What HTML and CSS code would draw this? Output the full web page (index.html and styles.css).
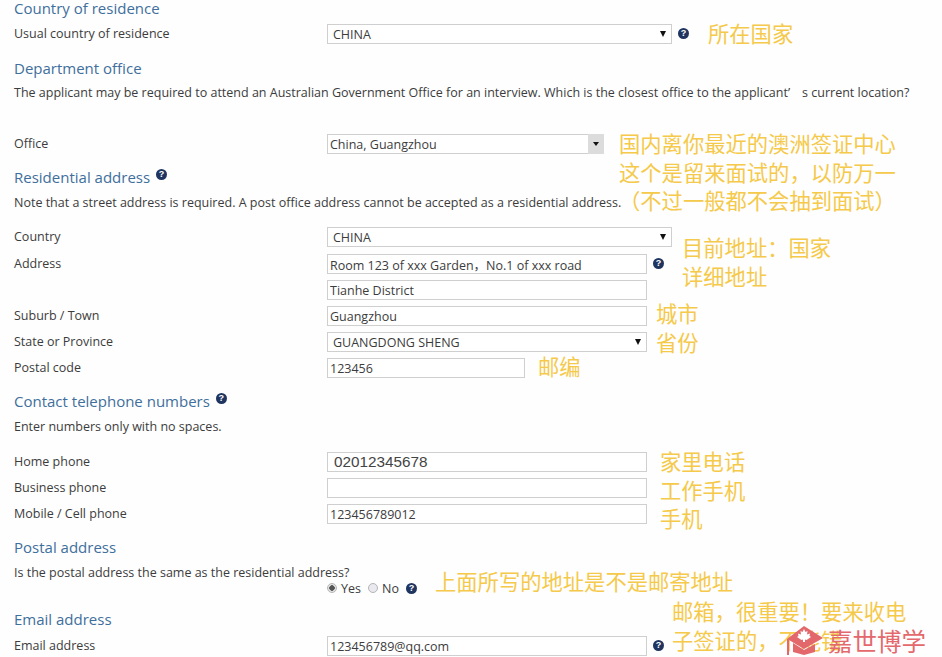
FILE: index.html
```html
<!DOCTYPE html>
<html lang="zh-CN">
<head>
<meta charset="utf-8">
<title>Application form</title>
<link rel="stylesheet" href="styles.css">
</head>
<body>
<main class="page">
  <h2 class="heading">Country of residence</h2>
  <div class="row mt6"><label class="label">Usual country of residence</label>
    <div class="select wide"><select><option>CHINA</option></select><i class="arrow"></i></div><span class="help">?</span></div>

  <h2 class="heading mt16">Department office</h2>
  <p class="text mt5">The applicant may be required to attend an Australian Government Office for an interview. Which is the closest office to the applicant<span class="cjkq">’</span>s current location?</p>
  <div class="row mt33"><label class="label">Office</label>
    <div class="select office"><select class="tight"><option>China, Guangzhou</option></select><span class="dropbtn"><i class="arrow"></i></span></div></div>

  <h2 class="heading mt15">Residential address <span class="help up">?</span></h2>
  <p class="text mt6">Note that a street address is required. A post office address cannot be accepted as a residential address.</p>
  <div class="group mt16">
    <div class="row"><label class="label">Country</label><div class="select wide"><select><option>CHINA</option></select><i class="arrow"></i></div></div>
    <div class="row nudge"><label class="label">Address</label><input class="field long" value="Room 123 of xxx Garden，No.1 of xxx road"><span class="help">?</span></div>
    <div class="row"><span class="label"></span><input class="field long" value="Tianhe District"></div>
    <div class="row"><label class="label">Suburb / Town</label><input class="field long" value="Guangzhou"></div>
    <div class="row"><label class="label">State or Province</label><div class="select long"><select><option>GUANGDONG SHENG</option></select><i class="arrow"></i></div></div>
    <div class="row"><label class="label">Postal code</label><input class="field short" value="123456"></div>
  </div>

  <h2 class="heading mt15">Contact telephone numbers <span class="help up">?</span></h2>
  <p class="text mt6">Enter numbers only with no spaces.</p>
  <div class="group mt17">
    <div class="row"><label class="label">Home phone</label><input class="field long big" value="02012345678"></div>
    <div class="row"><label class="label">Business phone</label><input class="field long" value=""></div>
    <div class="row"><label class="label">Mobile / Cell phone</label><input class="field long" value="123456789012"></div>
  </div>

  <h2 class="heading mt15">Postal address</h2>
  <p class="text mt6">Is the postal address the same as the residential address?</p>
  <div class="radios">
    <span class="radio on"></span><span class="opt">Yes</span>
    <span class="radio"></span><span class="opt">No</span>
    <span class="help">?</span>
  </div>

  <h2 class="heading mt15">Email address</h2>
  <div class="row mt7"><label class="label">Email address</label><input class="field long" value="123456789@qq.com"><span class="help">?</span></div>
</main>

<div class="note n-country">所在国家</div>
<div class="note n-office">国内离你最近的澳洲签证中心<br>这个是留来面试的，以防万一<br>（不过一般都不会抽到面试）</div>
<div class="note n-addr">目前地址：国家<br>详细地址</div>
<div class="note n-city">城市<br>省份</div>
<div class="note n-post">邮编</div>
<div class="note n-phone">家里电话<br>工作手机<br>手机</div>
<div class="note n-same">上面所写的地址是不是邮寄地址</div>
<div class="note n-mail">邮箱，很重要！要来收电<br>子签证的，不能错</div>

<div class="logo">
  <svg class="logo-cap" width="38" height="30" viewBox="0 0 38 30" aria-hidden="true">
    <path d="M18 0 37 12 18 23 3 14 3 29 1 29 1 13Z" fill="#e2686c"/>
    <path d="M7 17 18 24 29 18 29 26 18 29 7 26Z" fill="#e2686c"/>
    <path d="M18 3 19.5 6 21.5 5 21 8.5 24 7.5 23.5 10 25 11 20.5 14 19 13.5 19 16 17 16 17 13.5 15.5 14 11 11 12.5 10 12 7.500 15 8.500 14.500 5 16.500 6Z" fill="#fff"/>
  </svg>
  <span class="logo-text">嘉世博学</span>
</div>
</body>
</html>
```
FILE: styles.css
```css
* { box-sizing: border-box; }
html, body { margin: 0; padding: 0; }
body {
  width: 942px;
  height: 657px;
  overflow: hidden;
  position: relative;
  background: #fefefe;
  color: #3c3c3c;
  font-family: "Open Sans", "Noto Sans CJK SC", sans-serif;
  font-size: 12.5px;
}
.page { padding-left: 14px; }

.heading {
  margin: 0;
  height: 18px;
  font-size: 15px;
  font-weight: 400;
  line-height: 16px;
  color: #3f6f9c;
  white-space: nowrap;
}
.text {
  margin: 0;
  height: 18px;
  line-height: 20px;
  font-size: 12.5px;
  white-space: nowrap;
}
.cjkq { margin-right: 12px; }

.mt5 { margin-top: 5px; }
.mt6 { margin-top: 6px; }
.mt7 { margin-top: 7px; }
.mt15 { margin-top: 15px; }
.mt16 { margin-top: 16px; }
.mt17 { margin-top: 17px; }
.mt33 { margin-top: 33px; }

.group { display: flex; flex-direction: column; gap: 6px; }
.nudge { margin-top: 1px; }
.row { display: flex; align-items: flex-start; height: 20px; }
.label {
  flex: 0 0 313px;
  height: 20px;
  line-height: 20px;
  font-size: 12.5px;
  white-space: nowrap;
}

.field, .select select {
  height: 20px;
  border: 1px solid #cfcfcf;
  border-radius: 0;
  background: #fff;
  color: #3c3c3c;
  font-family: "Open Sans", "Noto Sans CJK SC", sans-serif;
  font-size: 12.5px;
  outline: none;
  margin: 0;
}
.field { padding: 0 2px; display: block; }
.long { width: 320px; }
.short { width: 198px; }
.big { font-family: "Liberation Sans", sans-serif; font-size: 15.3px; padding-left: 6px; color: #444; }

.select { position: relative; height: 20px; }
.select select {
  display: block;
  width: 100%;
  padding: 0 0 0 5px;
  appearance: none;
  -webkit-appearance: none;
}
.select select.tight { padding-left: 2px; }
.wide { width: 345px; }
.office { width: 277px; }
.arrow {
  position: absolute;
  right: 6px;
  top: 7px;
  width: 0;
  height: 0;
  border-left: 3px solid transparent;
  border-right: 3px solid transparent;
  border-top: 6px solid #111;
}
.dropbtn {
  position: absolute;
  right: 0;
  top: 0;
  width: 16px;
  height: 20px;
  background: #dcdcdc;
}
.dropbtn .arrow { right: 5px; top: 8px; border-top-width: 4px; }

.help {
  display: inline-block;
  flex: none;
  width: 11px;
  height: 11px;
  margin: 4px 0 0 6px;
  border-radius: 50%;
  background: #1f3560;
  color: #fff;
  font-family: "Liberation Sans", sans-serif;
  font-size: 9px;
  font-weight: 700;
  line-height: 11px;
  text-align: center;
}
.help.up { margin: 0 0 0 2px; vertical-align: 6px; }

.radios {
  display: flex;
  align-items: center;
  height: 16px;
  margin-top: -1px;
  padding-left: 313px;
  font-size: 12.5px;
}
.radio {
  flex: none;
  width: 10px;
  height: 10px;
  border-radius: 50%;
  border: 1px solid #b5b5b5;
  background: #e9e9ef;
}
.radio.on { background: radial-gradient(circle, #555 0 2.500px, #e4e4e4 3px); }
.opt { margin: 0 7px 0 4px; }
.radios .help { margin: 0; }

.note {
  position: absolute;
  color: #f5c94a;
  font-family: "Noto Sans CJK SC", sans-serif;
  font-size: 21.3px;
  font-weight: 400;
  line-height: 28.500px;
  white-space: nowrap;
}
.n-country { left: 708px; top: 19px; }
.n-office { left: 619px; top: 129px; }
.n-addr { left: 682px; top: 233px; }
.n-city { left: 656px; top: 299px; }
.n-post { left: 538px; top: 352px; }
.n-phone { left: 660px; top: 447px; }
.n-same { left: 435px; top: 567px; }
.n-mail { left: 672px; top: 597px; }

.logo {
  position: absolute;
  left: 786px;
  top: 626px;
  display: flex;
  align-items: flex-start;
}
.logo-text {
  margin: 0 0 0 4px;
  color: #e4696d;
  font-family: "Noto Sans CJK SC", sans-serif;
  font-size: 24.500px;
  line-height: 30px;
  white-space: nowrap;
}
```
